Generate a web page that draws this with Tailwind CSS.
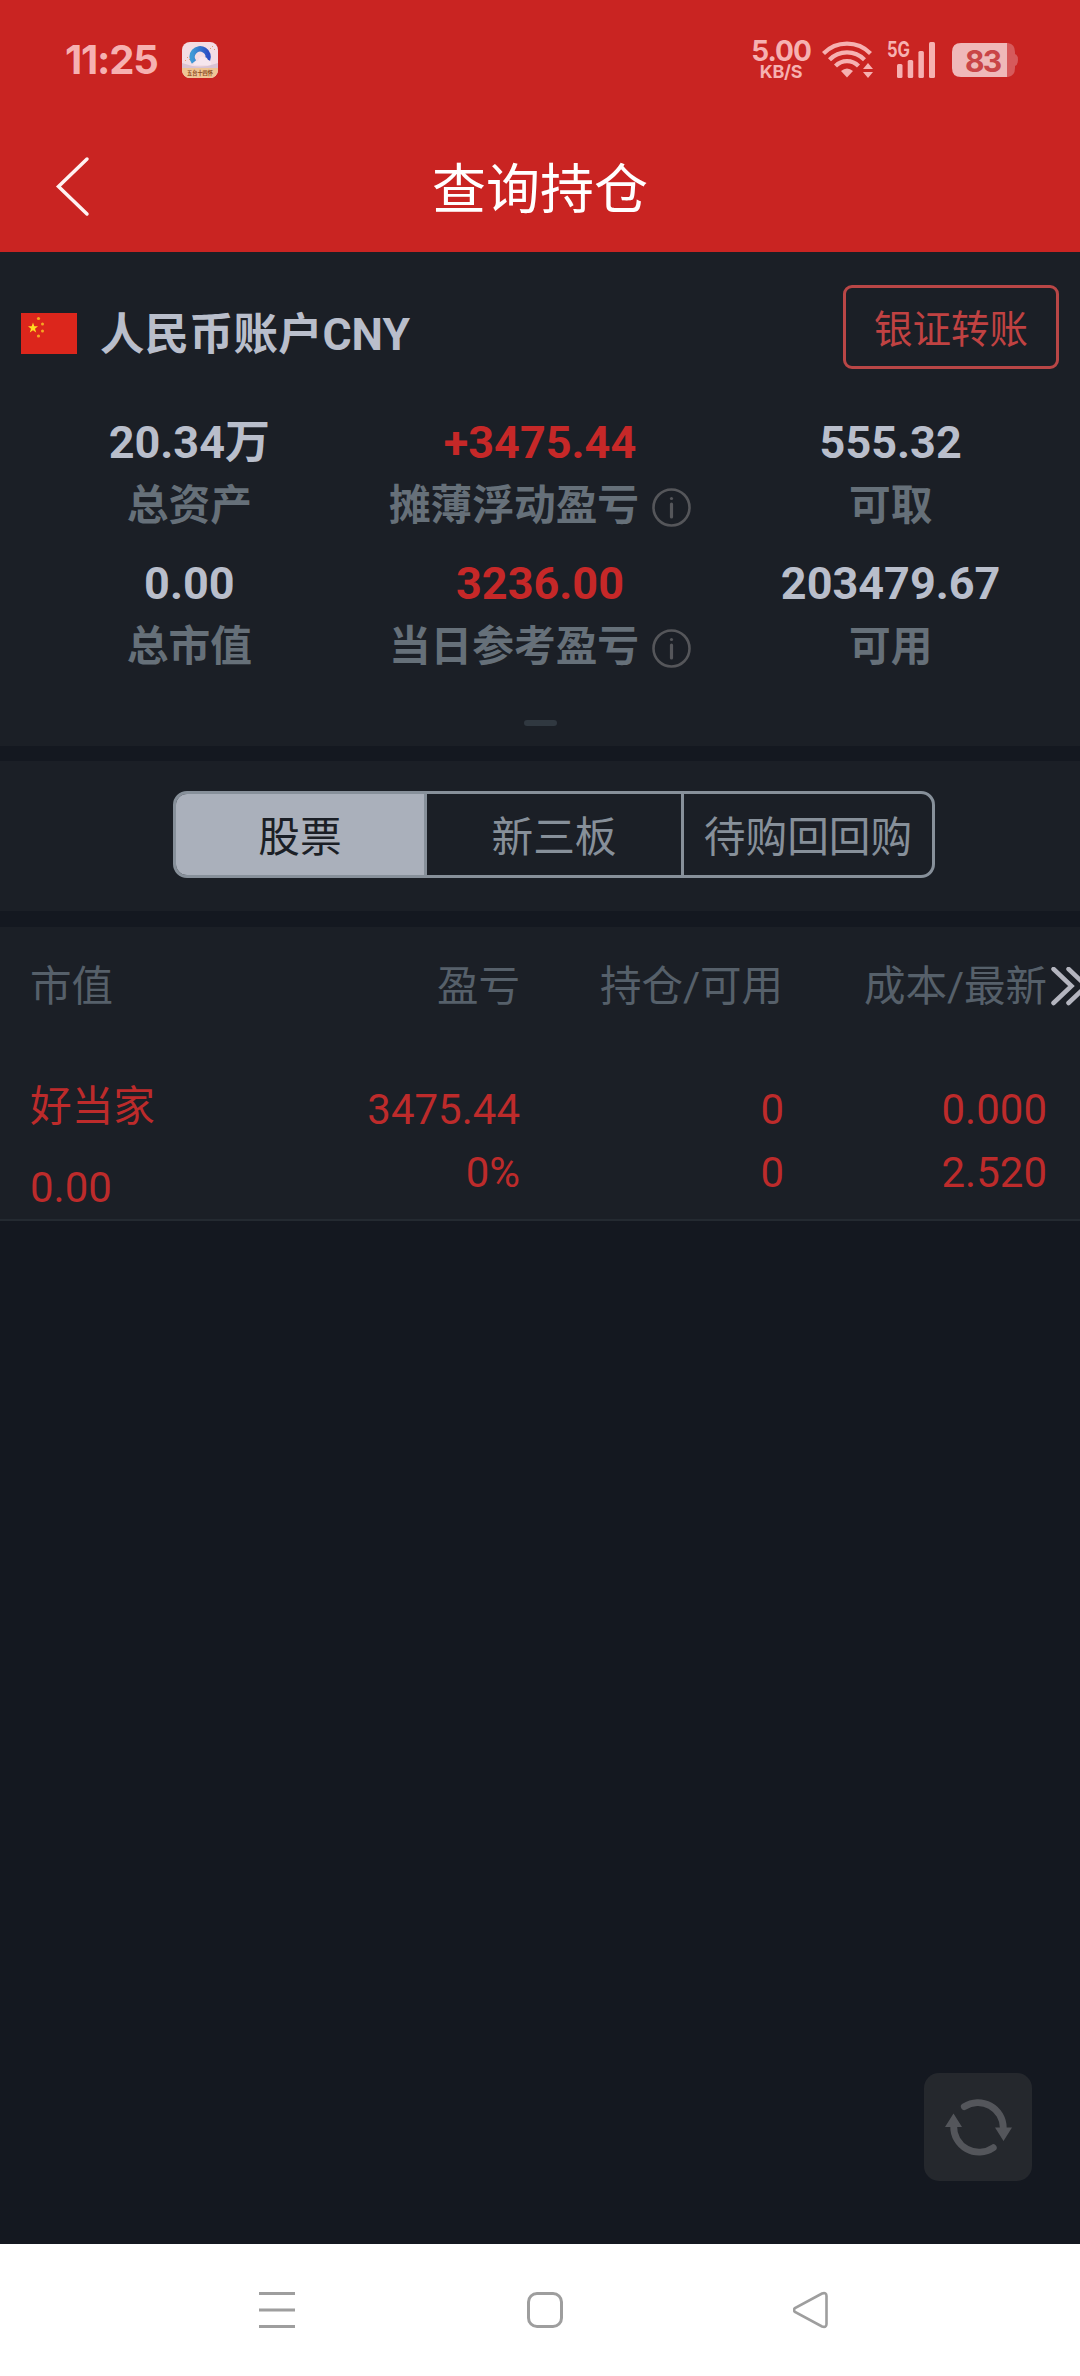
<!DOCTYPE html>
<html lang="zh-CN">
<head>
  <meta charset="UTF-8">
  <title>查询持仓</title>
  <meta name="viewport" content="width=device-width, initial-scale=1.0">
  <script src="https://cdn.jsdelivr.net/npm/@tailwindcss/browser@4"></script>
  <style>
    body, html {
      font-family: Roboto, 'Noto Sans CJK SC', sans-serif;
    }
  </style>
</head>
<body class="bg-[#141820] w-[1080px] h-[2376px] flex flex-col overflow-hidden">
  <!-- Header -->
  <header class="h-[252px] shrink-0 bg-[#c92422] flex flex-col">
    <div class="h-[120px] shrink-0 flex items-center pl-[65px] pr-[62px] font-['Inter'] text-[#f6b1b1]">
      <span class="text-[40px] leading-[40px] font-bold w-[117px] tracking-[-1.2px]">11:25</span>
      <svg class="w-9 h-9" viewBox="0 0 36 36">
        <defs>
          <clipPath id="app"><rect width="36" height="36" rx="8" /></clipPath>
          <linearGradient id="ring" x1="0" x2="1"><stop offset="0" stop-color="#3f9ad6" /><stop offset="1" stop-color="#2b4fc4" /></linearGradient>
        </defs>
        <g clip-path="url(#app)">
          <rect width="36" height="36" fill="#f3dde4" />
          <path d="M0 21q18 7 36 0v6H0z" fill="#d9c3d3" />
          <path d="M12 20a8 8 0 1 1 13.500-2" fill="none" stroke="url(#ring)" stroke-width="5.500" />
          <path d="M12 23q0-4 4-4 2-6 6-4 3 0 4 3 4 1 3 5z" fill="#f6e6ee" />
          <path d="M30 4h1v1h-1zM32 7h1v1h-1zM28 6h1v1h-1zM5 15h1v1H5zM3 18h1v1H3zM7 17h1v1H7z" fill="#e0a070" />
          <rect y="26" width="36" height="10" fill="#efc595" />
          <text x="18" y="33" text-anchor="middle" font-size="5.200" font-weight="700" fill="#8a4a20" font-family="Noto Sans CJK SC">五台十四怀</text>
        </g>
      </svg>
      <div class="ml-auto flex items-center">
        <div class="w-[60px] flex flex-col items-center font-bold">
          <span class="text-[28px] leading-[23px] tracking-[-1px]">5.00</span>
          <span class="text-[18px] leading-[18px] tracking-[-0.3px]">KB/S</span>
        </div>
        <svg class="ml-[11px] w-[52px] h-[38px]" viewBox="0 0 52 38" fill="none" stroke="#f6b1b1" stroke-width="4.200">
          <path d="M1.500 12.500a33 33 0 0 1 47 0M7.500 18.800a24.500 24.500 0 0 1 35 0M13.500 25a16 16 0 0 1 23 0" />
          <path d="M19 30q6-5 12 0l-6 6.500z" fill="#f6b1b1" stroke="none" />
          <path d="M41 28l5-6 5 6zM41 31h10l-5 6z" fill="#f6b1b1" stroke="none" />
        </svg>
        <svg class="ml-[13px] w-[50px] h-[38px] overflow-visible" viewBox="0 0 50 38" fill="#f6b1b1">
          <text x="0" y="16" font-size="21" font-weight="700" textLength="23" lengthAdjust="spacingAndGlyphs" font-family="Inter">5G</text>
          <rect x="10" y="23" width="5.500" height="14" rx="1.500" />
          <rect x="20.700" y="19" width="5.500" height="18" rx="1.500" />
          <rect x="31.400" y="10" width="5.500" height="27" rx="1.500" />
          <rect x="42" y="1" width="6" height="36" rx="1.500" />
        </svg>
        <svg class="ml-[15px] w-[66px] h-[34px] overflow-visible" viewBox="0 0 66 34">
          <path d="M55 0h1q7 1 7 9v2q3 1 3 6t-3 6v2q0 8-7 9h-1z" fill="#d65a5b" />
          <path d="M55 0H9Q0 0 0 9v16q0 9 9 9h46z" fill="#efb9b9" />
          <text x="31.500" y="28.500" text-anchor="middle" font-size="30" font-weight="700" fill="#c94547" font-family="Inter" textLength="37">83</text>
        </svg>
      </div>
    </div>
    <div class="h-[132px] grid grid-cols-3 items-center">
      <svg class="ml-[55px] w-[36px] h-[62px]" viewBox="0 0 36 62" fill="none" stroke="#fff2f2" stroke-width="3.500" stroke-linecap="round">
        <path d="M32 4L3.500 31.500 32 59" />
      </svg>
      <h1 class="pt-[9px] text-[54px] leading-[60px] text-white text-center">查询持仓</h1>
    </div>
  </header>

  <!-- Account summary -->
  <section class="h-[494px] shrink-0 bg-[#1b1f26] flex flex-col">
    <div class="h-[159px] shrink-0 flex items-start pt-[33px] pl-[21px] pr-[21px]">
      <svg class="mt-[28px] w-[56px] h-[41px]" viewBox="0 0 56 41">
        <rect width="56" height="41" fill="#dc261c" />
        <path d="M12 9.500l1.300 3.800h3.700l-3 2.400 1.200 3.900-3.200-2.400-3.200 2.400 1.200-3.900-3-2.400h3.700z" fill="#ffdc20" />
        <g fill="#f5a623"><circle cx="17.500" cy="5.500" r="1.600" /><circle cx="21.500" cy="11" r="1.500" /><circle cx="21.500" cy="18" r="1.500" /><circle cx="17.500" cy="23" r="1.600" /></g>
      </svg>
      <span class="ml-[23px] mt-[20px] text-[44.500px] leading-[60px] font-bold text-[#b9becb]">人民币账户CNY</span>
      <button class="ml-auto w-[216px] h-[84px] pt-[5px] border-3 border-[#b94646] rounded-[9px] text-[38.500px] leading-[73px] text-[#c04242]">银证转账</button>
    </div>
    <div class="grid grid-cols-3 gap-y-[15px] px-[14px] text-center font-bold text-[41.700px] leading-[62px] text-[#667079]">
      <div>
        <p class="text-[45px] leading-[64px] text-[#b9becb]">20.34万</p>
        <p>总资产</p>
      </div>
      <div>
        <p class="text-[45px] leading-[64px] text-[#c62828]">+3475.44</p>
        <div class="flex items-center justify-center gap-[13px]">摊薄浮动盈亏
          <svg class="mt-[3px] w-[39px] h-[39px]" viewBox="0 0 39 39" fill="none" stroke="#55565a" stroke-width="2.600"><circle cx="19.500" cy="19.500" r="18" /><path d="M19.500 16v13" stroke-width="3.200" stroke-linecap="round" /><circle cx="19.500" cy="10.500" r="1.600" fill="#55565a" stroke="none" /></svg>
        </div>
      </div>
      <div>
        <p class="text-[45px] leading-[64px] text-[#b9becb]">555.32</p>
        <p>可取</p>
      </div>
      <div>
        <p class="text-[45px] leading-[64px] text-[#b9becb]">0.00</p>
        <p>总市值</p>
      </div>
      <div>
        <p class="text-[45px] leading-[64px] text-[#c62828]">3236.00</p>
        <div class="flex items-center justify-center gap-[13px]">当日参考盈亏
          <svg class="mt-[3px] w-[39px] h-[39px]" viewBox="0 0 39 39" fill="none" stroke="#55565a" stroke-width="2.600"><circle cx="19.500" cy="19.500" r="18" /><path d="M19.500 16v13" stroke-width="3.200" stroke-linecap="round" /><circle cx="19.500" cy="10.500" r="1.600" fill="#55565a" stroke="none" /></svg>
        </div>
      </div>
      <div>
        <p class="text-[45px] leading-[64px] text-[#b9becb]">203479.67</p>
        <p>可用</p>
      </div>
    </div>
    <div class="mt-auto mb-5 mx-auto w-[33px] h-[6px] rounded-full bg-[#303840]"></div>
  </section>

  <!-- Tabs -->
  <section class="mt-[15px] h-[150px] shrink-0 bg-[#1b1f26] pt-[30px] pl-[173px]">
    <div class="w-[762px] h-[87px] flex border-3 border-[#87909a] rounded-[14px] overflow-hidden text-[41.700px] leading-[75px] text-center text-[#87909a]">
      <button class="w-[251px] pt-[6px] border-r-3 border-[#87909a] bg-[#aab0bb] text-[#1b1f26]">股票</button>
      <button class="w-[257px] pt-[6px] border-r-3 border-[#87909a]">新三板</button>
      <button class="flex-1 pt-[6px] whitespace-nowrap">待购回回购</button>
    </div>
  </section>

  <!-- Positions -->
  <section class="mt-4 h-[294px] shrink-0 bg-[#1b1f26] border-b-2 border-[#242a31] text-[42px]">
    <div class="h-[120px] flex items-center text-[41.500px] leading-[60px] text-[#56606a] whitespace-nowrap">
      <span class="w-[220px] pl-[30px]">市值</span>
      <span class="w-[300px] text-right">盈亏</span>
      <span class="w-[263px] text-right">持仓/可用</span>
      <span class="w-[264px] text-right">成本/最新</span>
      <svg class="ml-[3px] w-[30px] h-[40px] shrink-0" viewBox="0 0 30 40" fill="none" stroke="#b4b5bf" stroke-width="4.500" stroke-linecap="round">
        <path d="M3.500 2l18 17-18 17M18.500 2l18 17-18 17" />
      </svg>
    </div>
    <div class="flex leading-[63px] text-[#bd2b2b]">
      <div class="w-[220px] pl-[30px] pt-[28px]">
        <p class="text-[41.700px]">好当家</p>
        <p class="mt-[18px]">0.00</p>
      </div>
      <div class="w-[300px] pt-[31px] text-right"><p>3475.44</p><p>0%</p></div>
      <div class="w-[264px] pt-[31px] text-right"><p>0</p><p>0</p></div>
      <div class="w-[263px] pt-[31px] text-right"><p>0.000</p><p>2.520</p></div>
    </div>
  </section>

  <!-- Refresh -->
  <button class="mt-auto mb-[63px] ml-auto mr-12 w-[108px] h-[108px] shrink-0 rounded-[15px] bg-[#25282d]">
    <svg class="w-full h-full" viewBox="0 0 108 108" fill="none" stroke="#54565b" stroke-width="6.800" stroke-linecap="round">
      <path d="M40.300 33.700A25.300 25.300 0 0 1 79.300 55" />
      <path d="M69.300 74.700A25.300 25.300 0 0 1 29.700 53" />
      <path d="M71 54.500h17l-8.500 13.500zM21 54h17l-8.500-13.500z" fill="#54565b" stroke="none" />
    </svg>
  </button>

  <!-- System navigation -->
  <nav class="h-[132px] shrink-0 bg-white flex items-center pl-[259px]">
    <svg class="w-[36px] h-[38px]" viewBox="0 0 36 38" fill="#9e9e9e"><rect y="1" width="36" height="3" /><rect y="17.500" width="36" height="3" /><rect y="34" width="36" height="3" /></svg>
    <svg class="ml-[232px] w-[36px] h-[38px]" viewBox="0 0 36 38" fill="none" stroke="#9e9e9e" stroke-width="3"><rect x="1.500" y="2.500" width="33" height="33" rx="8.500" /></svg>
    <svg class="ml-[230px] w-[36px] h-[38px]" viewBox="0 0 36 38" fill="none" stroke="#9e9e9e" stroke-width="2.600"><path d="M2 17Q0 19 2 21L29 35.500Q33.500 37 33.500 33V5Q33.500 1 29 2.500Z" /></svg>
  </nav>
</body>
</html>
